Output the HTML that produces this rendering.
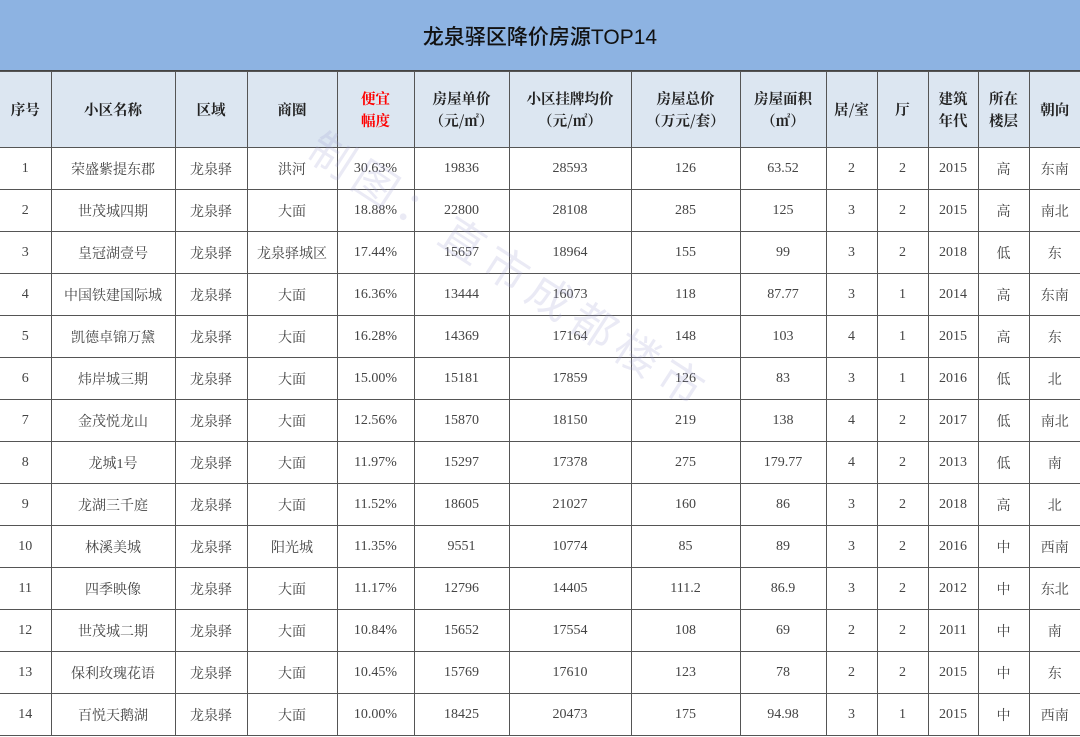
<!DOCTYPE html>
<html><head><meta charset="utf-8"><style>
body{margin:0;width:1080px;height:737px;overflow:hidden;background:#fff;font-family:"Liberation Serif","Noto Serif CJK SC","Noto Sans CJK SC",serif;}
.title{position:absolute;left:0;top:0;width:1080px;height:72px;background:#8db3e2;border-bottom:2px solid #444;box-sizing:border-box;text-align:center;line-height:76px;font-size:21px;color:#111;font-family:"Liberation Sans","Noto Sans CJK SC",sans-serif;font-weight:500}
table{position:absolute;left:0;top:71px;border-collapse:collapse;table-layout:fixed;width:1080px}
td{border:1px solid #555;text-align:center;font-size:14px;color:#444;padding:0;height:41px}
tr.h td{background:#dce6f1;height:75px;font-weight:bold;font-size:14.5px;color:#222;line-height:22px;font-family:"Noto Serif CJK SC","Noto Sans CJK SC",serif}
td:first-child{border-left:none}td:last-child{border-right:none}
.red{color:#f00!important}
.wm{position:absolute;left:275px;top:245px;font-size:44px;color:rgba(160,160,210,0.22);transform:rotate(33deg);transform-origin:center;white-space:nowrap;letter-spacing:8px;font-family:"Noto Sans CJK SC",sans-serif;width:500px}
</style></head><body>
<div class="title">龙泉驿区降价房源TOP14</div>
<table>
<colgroup><col style="width:51px"><col style="width:124px"><col style="width:72px"><col style="width:90px"><col style="width:77px"><col style="width:95px"><col style="width:122px"><col style="width:109px"><col style="width:86px"><col style="width:51px"><col style="width:51px"><col style="width:50px"><col style="width:51px"><col style="width:51px"></colgroup>
<tr class="h"><td>序号</td><td>小区名称</td><td>区域</td><td>商圈</td><td class="red">便宜<br>幅度</td><td>房屋单价<br>（元/㎡）</td><td>小区挂牌均价<br>（元/㎡）</td><td>房屋总价<br>（万元/套）</td><td>房屋面积<br>（㎡）</td><td>居/室</td><td>厅</td><td>建筑<br>年代</td><td>所在<br>楼层</td><td>朝向</td></tr>
<tr><td>1</td><td>荣盛紫提东郡</td><td>龙泉驿</td><td>洪河</td><td>30.63%</td><td>19836</td><td>28593</td><td>126</td><td>63.52</td><td>2</td><td>2</td><td>2015</td><td>高</td><td>东南</td></tr>
<tr><td>2</td><td>世茂城四期</td><td>龙泉驿</td><td>大面</td><td>18.88%</td><td>22800</td><td>28108</td><td>285</td><td>125</td><td>3</td><td>2</td><td>2015</td><td>高</td><td>南北</td></tr>
<tr><td>3</td><td>皇冠湖壹号</td><td>龙泉驿</td><td>龙泉驿城区</td><td>17.44%</td><td>15657</td><td>18964</td><td>155</td><td>99</td><td>3</td><td>2</td><td>2018</td><td>低</td><td>东</td></tr>
<tr><td>4</td><td>中国铁建国际城</td><td>龙泉驿</td><td>大面</td><td>16.36%</td><td>13444</td><td>16073</td><td>118</td><td>87.77</td><td>3</td><td>1</td><td>2014</td><td>高</td><td>东南</td></tr>
<tr><td>5</td><td>凯德卓锦万黛</td><td>龙泉驿</td><td>大面</td><td>16.28%</td><td>14369</td><td>17164</td><td>148</td><td>103</td><td>4</td><td>1</td><td>2015</td><td>高</td><td>东</td></tr>
<tr><td>6</td><td>炜岸城三期</td><td>龙泉驿</td><td>大面</td><td>15.00%</td><td>15181</td><td>17859</td><td>126</td><td>83</td><td>3</td><td>1</td><td>2016</td><td>低</td><td>北</td></tr>
<tr><td>7</td><td>金茂悦龙山</td><td>龙泉驿</td><td>大面</td><td>12.56%</td><td>15870</td><td>18150</td><td>219</td><td>138</td><td>4</td><td>2</td><td>2017</td><td>低</td><td>南北</td></tr>
<tr><td>8</td><td>龙城1号</td><td>龙泉驿</td><td>大面</td><td>11.97%</td><td>15297</td><td>17378</td><td>275</td><td>179.77</td><td>4</td><td>2</td><td>2013</td><td>低</td><td>南</td></tr>
<tr><td>9</td><td>龙湖三千庭</td><td>龙泉驿</td><td>大面</td><td>11.52%</td><td>18605</td><td>21027</td><td>160</td><td>86</td><td>3</td><td>2</td><td>2018</td><td>高</td><td>北</td></tr>
<tr><td>10</td><td>林溪美城</td><td>龙泉驿</td><td>阳光城</td><td>11.35%</td><td>9551</td><td>10774</td><td>85</td><td>89</td><td>3</td><td>2</td><td>2016</td><td>中</td><td>西南</td></tr>
<tr><td>11</td><td>四季映像</td><td>龙泉驿</td><td>大面</td><td>11.17%</td><td>12796</td><td>14405</td><td>111.2</td><td>86.9</td><td>3</td><td>2</td><td>2012</td><td>中</td><td>东北</td></tr>
<tr><td>12</td><td>世茂城二期</td><td>龙泉驿</td><td>大面</td><td>10.84%</td><td>15652</td><td>17554</td><td>108</td><td>69</td><td>2</td><td>2</td><td>2011</td><td>中</td><td>南</td></tr>
<tr><td>13</td><td>保利玫瑰花语</td><td>龙泉驿</td><td>大面</td><td>10.45%</td><td>15769</td><td>17610</td><td>123</td><td>78</td><td>2</td><td>2</td><td>2015</td><td>中</td><td>东</td></tr>
<tr><td>14</td><td>百悦天鹅湖</td><td>龙泉驿</td><td>大面</td><td>10.00%</td><td>18425</td><td>20473</td><td>175</td><td>94.98</td><td>3</td><td>1</td><td>2015</td><td>中</td><td>西南</td></tr>
</table>
<div class="wm">制图：直市成都楼市</div>
</body></html>
